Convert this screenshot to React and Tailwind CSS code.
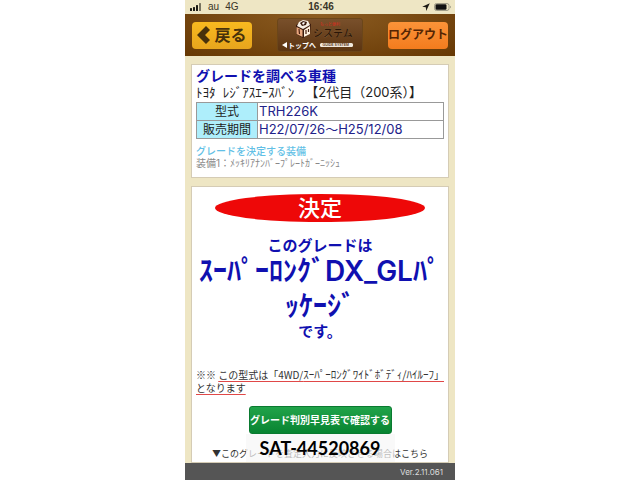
function StatusBar() {
  return (
    <div className="grid h-[14px] grid-cols-3 items-center pl-[5px] pr-[3px] font-['Liberation_Sans','Noto_Sans_CJK_JP',sans-serif] text-[10px] leading-[14px] text-[#3a3528]">
      <div className="flex items-center gap-[6px]">
        <svg width="12" height="8" viewBox="0 0 12 8" fill="#1c1a14" aria-hidden="true">
          <rect x="0" y="5" width="2" height="3" rx=".5" />
          <rect x="3" y="4" width="2" height="4" rx=".5" />
          <rect x="6" y="2" width="2" height="6" rx=".5" />
          <rect x="9" y="0" width="2" height="8" rx=".5" fill="#77725f" />
        </svg>
        <span>au</span>
        <span>4G</span>
      </div>
      <span className="text-center font-bold">16:46</span>
      <div className="flex items-center justify-end gap-1">
        <svg width="8" height="8" viewBox="0 0 8 8" aria-hidden="true">
          <path d="M7.8.2.2 3.8l3.6.5.4 3.6z" fill="#1c1a14" />
        </svg>
        <svg width="18" height="8" viewBox="0 0 18 8" aria-hidden="true">
          <rect x=".5" y=".5" width="14.5" height="7" rx="2" fill="none" stroke="#8d8a78" strokeWidth=".8" />
          <rect x="1.5" y="1.3" width="11" height="5.4" rx="1.2" fill="#111" />
          <path d="M16 2.7c1 .3 1 2.3 0 2.6z" fill="#8d8a78" />
        </svg>
      </div>
    </div>
  )
}

function Logo() {
  return (
    <a href="#top" className="flex h-[34px] w-[86px] items-center justify-center rounded-[3px] border border-[#6b4619] bg-linear-to-b from-[#79502b] to-[#5c3511]">
      <svg className="h-8 w-[84px]" viewBox="0 0 84 32" aria-label="システム トップへ">
        <path d="m18 6 7-4 8 3-1 10-7 4-7-4z" fill="#3a1a0c" />
        <path d="m19 7 2-4 4-2 5 1 2 4-7 4z" fill="#f6eee4" />
        <path d="m22 4 3-2 4 1-1 3-4 1z" fill="#3a1a0c" />
        <path d="m24 4 2-1 1 1-2 2z" fill="#fff" />
        <path d="m18.5 8 6 3v7l-6-3z" fill="#e9a77d" />
        <path d="m26 11 6-4v8l-6 3z" fill="#fff0dc" />
        <path d="m21 10 .5 5M28 11v4m2.500-5v3" stroke="#4a2010" strokeWidth="1.2" fill="none" />
        <text x="42" y="7" fontSize="4" fill="#d92d20" fontFamily="Noto Sans CJK JP">もっと便利</text>
        <text x="35" y="18" fontSize="10" fontWeight="700" fill="#2a1608" stroke="#a37a4b" strokeWidth=".2" fontFamily="Noto Sans CJK JP">システム</text>
        <path d="m4 26 5-3v6z" fill="#fff" />
        <text x="10" y="29" fontSize="7" fontWeight="700" fill="#fff" fontFamily="Noto Sans CJK JP">トップへ</text>
        <rect x="42" y="24" width="33" height="4" rx="1.5" fill="#f2e9dd" />
        <text x="44.5" y="27.3" fontSize="3.5" fontWeight="700" fill="#5c3a1a" fontFamily="Liberation Sans">GUIDE SYSTEM</text>
      </svg>
    </a>
  )
}

function Header() {
  return (
    <header className="flex h-[42px] items-center justify-between bg-[#6d3f08] bg-radial-[at_50%_0%] from-[#8d5d22] to-[#663804] px-[7px]">
      <button className="flex h-[27px] w-[60px] items-center justify-center gap-1 rounded-[4px] bg-linear-to-b from-[#f8b91f] to-[#e8a51d] text-base font-bold whitespace-nowrap text-[#47310b]">
        <svg className="h-[18px] w-[13px] shrink-0" viewBox="0 0 13 18" aria-hidden="true">
          <path d="m9 0 4 4-5 5 5 5-4 4-9-9z" fill="#47310b" />
        </svg>
        戻る
      </button>
      <Logo />
      <button className="h-[27px] w-[60px] rounded-[4px] bg-linear-to-b from-[#fb9338] to-[#f37c1d] text-xs font-bold whitespace-nowrap text-[#552503]">
        ログアウト
      </button>
    </header>
  )
}

function VehicleCard() {
  return (
    <section className="border border-[#d5ccb5] bg-white px-1 pt-[3px] pb-2">
      <h2 className="text-sm leading-4 font-bold text-[#1010b0]">グレードを調べる車種</h2>
      <p className="text-[13px] leading-[17px] whitespace-pre text-[#222]">ﾄﾖﾀ  ﾚｼﾞｱｽｴｰｽﾊﾞﾝ   【2代目（200系）】</p>
      <table className="mt-px w-full border-collapse text-[13px] leading-[17px] text-[#22228a]">
        <tbody>
          <tr>
            <th className="w-[61px] border border-[#999] bg-[#aeeefb] text-xs leading-[17px] font-normal text-[#222]">型式</th>
            <td className="border border-[#999] px-px">TRH226K</td>
          </tr>
          <tr>
            <th className="border border-[#999] bg-[#aeeefb] text-xs leading-[17px] font-normal text-[#222]">販売期間</th>
            <td className="border border-[#999] px-px">H22/07/26〜H25/12/08</td>
          </tr>
        </tbody>
      </table>
      <h3 className="mt-[6px] text-[10px] leading-3 font-medium text-[#62bfe6]">グレードを決定する装備</h3>
      <p className="text-[10px] leading-3 text-[#888]">装備1：ﾒｯｷﾘｱﾅﾝﾊﾞｰﾌﾟﾚｰﾄｶﾞｰﾆｯｼｭ</p>
    </section>
  )
}

function ResultCard() {
  return (
    <section className="mt-2 grow border border-[#d5ccb5] bg-white px-1 pt-[7px] text-center">
      <div className="mx-auto h-7 w-[210px] rounded-[50%] bg-[#ee0808] text-[22px] leading-7 font-medium text-white">決定</div>
      <div className="mt-4 font-bold text-[#1010b0]">
        <p className="text-[15px] leading-4">このグレードは</p>
        <p className="text-[28px] leading-[35px]">ｽｰﾊﾟｰﾛﾝｸﾞ<span className="font-semibold">DX_GL</span>ﾊﾟｯｹｰｼﾞ</p>
        <p className="text-[15px] leading-4">です。</p>
      </div>
      <p className="mt-7 text-left font-['Noto_Sans_CJK_JP',sans-serif] text-[10px] leading-[13px] whitespace-nowrap text-[#333]">
        ※※{' '}
        <span className="underline decoration-[#e04848] decoration-1 underline-offset-2">
          この型式は「4WD/<span className="text-[11px]">ｽｰﾊﾟｰﾛﾝｸﾞﾜｲﾄﾞﾎﾞﾃﾞｨ/ﾊｲﾙｰﾌ</span>」<br />となります
        </span>
      </p>
      <button className="mt-3 h-7 w-[143px] rounded-[3px] border border-[#0a7a30] bg-linear-to-b from-[#20a34a] to-[#078431] text-[10px] font-bold whitespace-nowrap text-white">
        グレード判別早見表で確認する
      </button>
      <div className="relative">
        <p className="flex justify-center pt-3 text-[9px] leading-4 whitespace-nowrap text-[#333]">▼このグレードを査定入力に反映させる場合はこちら</p>
        <div className="absolute inset-x-0 top-0 mx-auto w-[149px] bg-[#f6f6f6]/70 font-[Lato,sans-serif] text-lg leading-7 font-bold text-black">SAT-44520869</div>
      </div>
    </section>
  )
}

export default function App() {
  return (
    <div className="flex min-h-screen justify-center bg-white">
      <div className="flex w-full max-w-[270px] flex-col bg-[#eee6c4] font-[Inter,'Noto_Sans_CJK_JP',sans-serif]">
        <StatusBar />
        <Header />
        <main className="flex grow flex-col px-[6px] pt-2">
          <VehicleCard />
          <ResultCard />
        </main>
        <footer className="h-[18px] bg-[#555] pr-3 text-right text-[8px] leading-[18px] text-[#ddd]">Ver.2.11.061</footer>
      </div>
    </div>
  )
}
